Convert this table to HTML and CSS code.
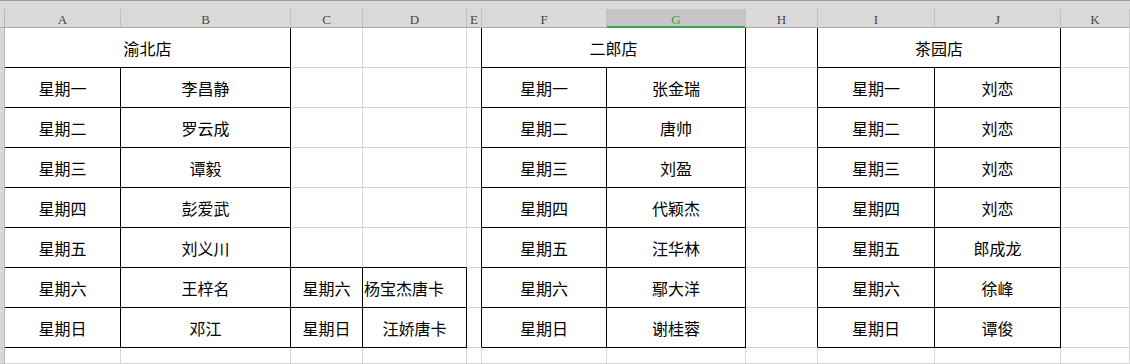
FILE: index.html
```html
<!DOCTYPE html>
<html lang="zh-CN">
<head>
<meta charset="utf-8">
<title>排班表</title>
<link rel="stylesheet" href="styles.css">
</head>
<body>
<div class="sheet">
  <div class="strip"></div>

  <div class="ch corner"></div>
  <div class="ch">A</div>
  <div class="ch">B</div>
  <div class="ch">C</div>
  <div class="ch">D</div>
  <div class="ch">E</div>
  <div class="ch">F</div>
  <div class="ch sel">G</div>
  <div class="ch">H</div>
  <div class="ch">I</div>
  <div class="ch">J</div>
  <div class="ch">K</div>

  <!-- row 1 -->
  <div class="rh"></div>
  <div class="c span2 br bb">渝北店</div>
  <div class="c"></div>
  <div class="c"></div>
  <div class="c br"></div>
  <div class="c span2 br bb">二郎店</div>
  <div class="c br"></div>
  <div class="c span2 br bb">茶园店</div>
  <div class="c"></div>

  <!-- row 2 -->
  <div class="rh"></div>
  <div class="c br bb">星期一</div>
  <div class="c br bb">李昌静</div>
  <div class="c"></div>
  <div class="c"></div>
  <div class="c br"></div>
  <div class="c br bb">星期一</div>
  <div class="c br bb">张金瑞</div>
  <div class="c br"></div>
  <div class="c br bb">星期一</div>
  <div class="c br bb">刘恋</div>
  <div class="c"></div>

  <!-- row 3 -->
  <div class="rh"></div>
  <div class="c br bb">星期二</div>
  <div class="c br bb">罗云成</div>
  <div class="c"></div>
  <div class="c"></div>
  <div class="c br"></div>
  <div class="c br bb">星期二</div>
  <div class="c br bb">唐帅</div>
  <div class="c br"></div>
  <div class="c br bb">星期二</div>
  <div class="c br bb">刘恋</div>
  <div class="c"></div>

  <!-- row 4 -->
  <div class="rh"></div>
  <div class="c br bb">星期三</div>
  <div class="c br bb">谭毅</div>
  <div class="c"></div>
  <div class="c"></div>
  <div class="c br"></div>
  <div class="c br bb">星期三</div>
  <div class="c br bb">刘盈</div>
  <div class="c br"></div>
  <div class="c br bb">星期三</div>
  <div class="c br bb">刘恋</div>
  <div class="c"></div>

  <!-- row 5 -->
  <div class="rh"></div>
  <div class="c br bb">星期四</div>
  <div class="c br bb">彭爱武</div>
  <div class="c"></div>
  <div class="c"></div>
  <div class="c br"></div>
  <div class="c br bb">星期四</div>
  <div class="c br bb">代颖杰</div>
  <div class="c br"></div>
  <div class="c br bb">星期四</div>
  <div class="c br bb">刘恋</div>
  <div class="c"></div>

  <!-- row 6 -->
  <div class="rh"></div>
  <div class="c br bb">星期五</div>
  <div class="c br bb">刘义川</div>
  <div class="c bb"></div>
  <div class="c bb"></div>
  <div class="c br"></div>
  <div class="c br bb">星期五</div>
  <div class="c br bb">汪华林</div>
  <div class="c br"></div>
  <div class="c br bb">星期五</div>
  <div class="c br bb">郎成龙</div>
  <div class="c"></div>

  <!-- row 7 -->
  <div class="rh"></div>
  <div class="c br bb">星期六</div>
  <div class="c br bb">王梓名</div>
  <div class="c br bb">星期六</div>
  <div class="c br bb left">杨宝杰唐卡</div>
  <div class="c br"></div>
  <div class="c br bb">星期六</div>
  <div class="c br bb">鄢大洋</div>
  <div class="c br"></div>
  <div class="c br bb">星期六</div>
  <div class="c br bb">徐峰</div>
  <div class="c"></div>

  <!-- row 8 -->
  <div class="rh"></div>
  <div class="c br bb">星期日</div>
  <div class="c br bb">邓江</div>
  <div class="c br bb">星期日</div>
  <div class="c br bb">汪娇唐卡</div>
  <div class="c br"></div>
  <div class="c br bb">星期日</div>
  <div class="c br bb">谢桂蓉</div>
  <div class="c br"></div>
  <div class="c br bb">星期日</div>
  <div class="c br bb">谭俊</div>
  <div class="c"></div>

  <!-- row 9 (partial) -->
  <div class="rh"></div>
  <div class="c"></div>
  <div class="c"></div>
  <div class="c"></div>
  <div class="c"></div>
  <div class="c"></div>
  <div class="c"></div>
  <div class="c"></div>
  <div class="c"></div>
  <div class="c"></div>
  <div class="c"></div>
  <div class="c"></div>
</div>
</body>
</html>
```
FILE: styles.css
```css
html, body {
  margin: 0;
  padding: 0;
  background: #ffffff;
}

.sheet {
  width: 1130px;
  height: 364px;
  overflow: hidden;
  display: grid;
  grid-template-columns: 5px 116px 170px 72px 104px 15px 125px 139px 72px 117px 126px 69px;
  grid-template-rows: 9px 19px repeat(8, 40px) 16px;
  font-family: "Noto Sans CJK SC", "Noto Sans CJK TC", sans-serif;
  font-size: 16px;
  color: #000;
}

.sheet > div {
  box-sizing: border-box;
}

.strip {
  grid-column: 1 / -1;
  background: #d9d9d9;
  border-top: 1px solid #9d9d9d;
}

.ch {
  background: #d9d9d9;
  border-right: 1px solid #c0c0c0;
  border-bottom: 1px solid #a8a8a8;
  font-family: "Liberation Serif", serif;
  font-size: 13px;
  color: #454545;
  display: flex;
  align-items: center;
  justify-content: center;
  padding-top: 3px;
}

.ch.corner {
  border-right-color: #b8b8b8;
}

.ch.sel {
  background: #c6c6c6;
  color: #3c9a45;
  border-bottom-color: #3fa349;
  box-shadow: inset 0 -1px 0 #3fa349;
}

.rh {
  background: #d9d9d9;
  border-right: 1px solid #b8b8b8;
  border-bottom: 1px solid #c4c4c4;
}

.c {
  border-right: 1px solid #d6d6d6;
  border-bottom: 1px solid #d6d6d6;
  display: flex;
  align-items: center;
  justify-content: center;
  white-space: nowrap;
  padding-top: 1px;
}

.c.span2 {
  grid-column: span 2;
}

.c.br {
  border-right-color: #000;
}

.c.bb {
  border-bottom-color: #000;
}

.c.left {
  justify-content: flex-start;
  padding-left: 1px;
}
```
